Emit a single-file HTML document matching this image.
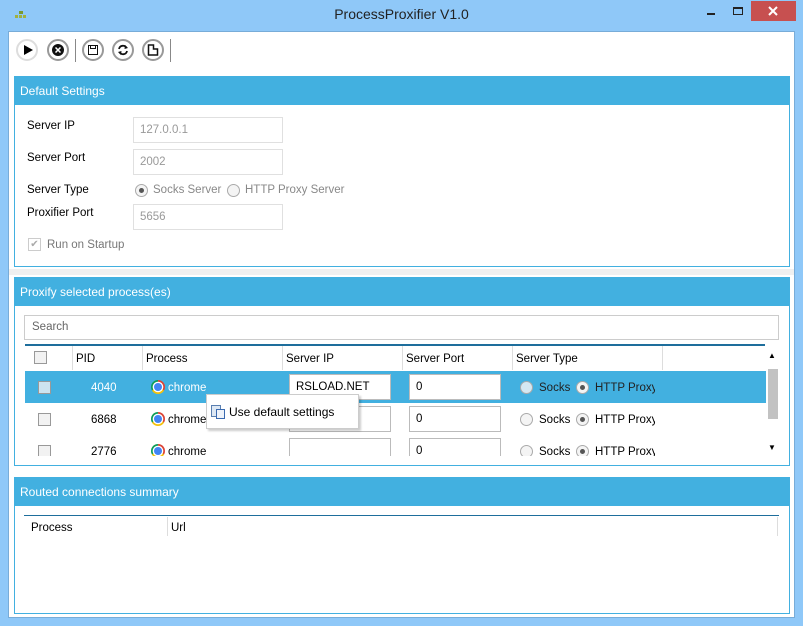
<!DOCTYPE html>
<html><head><meta charset="utf-8"><style>
*{box-sizing:border-box;margin:0;padding:0}
body{width:803px;height:626px;background:#8fc8f8;font-family:"Segoe UI","Liberation Sans",sans-serif;font-size:11.5px;line-height:16px;color:#000;position:relative;overflow:hidden}
.a{position:absolute;white-space:nowrap}
.client{left:8px;top:31px;width:787px;height:587px;background:#fff;border:1px solid #78acd8}
.hdr{background:#42b0e0;color:#fff;font-size:12px;padding-left:5px;line-height:28px}
.panel{border:1px solid #42b0e0;background:#fff}
.tb{width:22px;height:22px;border-radius:50%;border:2px solid #999;background:#fff}
.box{border:1px solid #e0e0e0;color:#999;padding-left:6px;line-height:24px;height:26px}
.rad{width:13px;height:13px;border-radius:50%;border:1px solid #aaa;background:#f4f4f4}
.rad.on::after{content:"";position:absolute;left:3px;top:3px;width:5px;height:5px;border-radius:50%;background:#555}
.chk{width:13px;height:13px;border:1px solid #999;background:#f2f2f2}
.chr{width:14px;height:14px;border-radius:50%;background:conic-gradient(#db4437 0 120deg,#f4c20d 120deg 240deg,#0f9d58 240deg 360deg)}
.chr::after{content:"";position:absolute;left:3px;top:3px;width:8px;height:8px;border-radius:50%;background:#4285f4;box-shadow:0 0 0 1.3px #fff}
.inp{background:#fff;border:1px solid #bbb;height:26px;line-height:24px;padding-left:6px}
</style></head><body>
<div class="a" style="left:15px;top:11px;width:12px;height:8px">
<div class="a" style="left:4px;top:0;width:4px;height:3px;background:#7a9a30"></div>
<div class="a" style="left:0;top:4px;width:3px;height:3px;background:#a0b040"></div>
<div class="a" style="left:4px;top:4px;width:3px;height:3px;background:#a0b040"></div>
<div class="a" style="left:8px;top:4px;width:3px;height:3px;background:#a0b040"></div></div>
<div class="a" style="left:0;width:803px;top:6px;text-align:center;font-size:14px;color:#222">ProcessProxifier V1.0</div>
<div class="a" style="left:707px;top:13px;width:8px;height:2px;background:#222"></div>
<div class="a" style="left:733px;top:7px;width:10px;height:8px;border:1px solid #222;border-top-width:2px"></div>
<div class="a" style="left:751px;top:1px;width:45px;height:20px;background:#c75050"></div>
<svg class="a" style="left:768px;top:6px" width="10" height="10"><path d="M1 1L9 9M9 1L1 9" stroke="#fff" stroke-width="2"/></svg>
<div class="a client"></div>
<div class="a tb" style="left:16px;top:39px;border-color:#ddd"></div>
<div class="a" style="left:24px;top:45px;width:0;height:0;border-left:9px solid #000;border-top:5px solid transparent;border-bottom:5px solid transparent"></div>
<div class="a tb" style="left:47px;top:39px"></div>
<div class="a" style="left:52px;top:44px;width:12px;height:12px;border-radius:50%;background:#111"></div>
<svg class="a" style="left:55px;top:47px" width="6" height="6"><path d="M0.5 0.5L5.5 5.5M5.5 0.5L0.5 5.5" stroke="#fff" stroke-width="1.5"/></svg>
<div class="a" style="left:75px;top:39px;width:1px;height:23px;background:#888"></div>
<div class="a tb" style="left:82px;top:39px"></div>
<div class="a" style="left:88px;top:45px;width:10px;height:10px;border:1.5px solid #111"></div>
<div class="a" style="left:90px;top:45px;width:6px;height:4px;border:1.5px solid #111;border-top:0"></div>
<div class="a tb" style="left:112px;top:39px"></div>
<svg class="a" style="left:117px;top:44px" width="12" height="12"><path d="M2 5A4 4 0 0 1 9.5 4M10 7A4 4 0 0 1 2.5 8" stroke="#111" stroke-width="1.8" fill="none"/><path d="M8 1L11 4L7.5 5Z M4 11L1 8L4.5 7Z" fill="#111"/></svg>
<div class="a tb" style="left:142px;top:39px"></div>
<svg class="a" style="left:147px;top:44px" width="12" height="12"><path d="M1.5 1V11H10.5V5H6.5V1Z" stroke="#111" stroke-width="1.5" fill="none"/></svg>
<div class="a" style="left:170px;top:39px;width:1px;height:23px;background:#888"></div>
<div class="a panel" style="left:14px;top:76px;width:776px;height:191px"><div class="hdr">Default Settings</div></div>
<div class="a" style="left:27px;top:118px">Server IP</div>
<div class="a box" style="left:133px;top:117px;width:150px">127.0.0.1</div>
<div class="a" style="left:27px;top:150px">Server Port</div>
<div class="a box" style="left:133px;top:149px;width:150px">2002</div>
<div class="a" style="left:27px;top:182px">Server Type</div>
<div class="a rad on" style="left:135px;top:184px"></div>
<div class="a" style="left:153px;top:182px;color:#888">Socks Server</div>
<div class="a rad" style="left:227px;top:184px"></div>
<div class="a" style="left:245px;top:182px;color:#888">HTTP Proxy Server</div>
<div class="a" style="left:27px;top:205px">Proxifier Port</div>
<div class="a box" style="left:133px;top:204px;width:150px">5656</div>
<div class="a chk" style="left:28px;top:238px;border-color:#ccc;background:#fff;color:#aaa;font-size:10px;line-height:11px;text-align:center">✔</div>
<div class="a" style="left:47px;top:237px;color:#777">Run on Startup</div>
<div class="a" style="left:9px;top:269px;width:785px;height:6px;background:#f0f0f0"></div>
<div class="a panel" style="left:14px;top:277px;width:776px;height:189px"><div class="hdr">Proxify selected process(es)</div></div>
<div class="a" style="left:24px;top:315px;width:755px;height:25px;border:1px solid #ccc;color:#666;padding-left:7px;line-height:22px">Search</div>
<div class="a" style="left:25px;top:344px;width:740px;height:2px;background:#1e6e9c"></div>
<div class="a chk" style="left:34px;top:351px"></div>
<div class="a" style="left:72px;top:346px;width:1px;height:24px;background:#ddd"></div>
<div class="a" style="left:142px;top:346px;width:1px;height:24px;background:#ddd"></div>
<div class="a" style="left:282px;top:346px;width:1px;height:24px;background:#ddd"></div>
<div class="a" style="left:402px;top:346px;width:1px;height:24px;background:#ddd"></div>
<div class="a" style="left:512px;top:346px;width:1px;height:24px;background:#ddd"></div>
<div class="a" style="left:662px;top:346px;width:1px;height:24px;background:#ddd"></div>
<div class="a" style="left:76px;top:351px">PID</div>
<div class="a" style="left:146px;top:351px">Process</div>
<div class="a" style="left:286px;top:351px">Server IP</div>
<div class="a" style="left:406px;top:351px">Server Port</div>
<div class="a" style="left:516px;top:351px">Server Type</div>
<div class="a" style="left:768px;top:348px;font-size:8px">▲</div>
<div class="a" style="left:768px;top:440px;font-size:8px">▼</div>
<div class="a" style="left:768px;top:369px;width:10px;height:50px;background:#c2c2c2"></div>
<div class="a" style="left:25px;top:371px;width:741px;height:85px;overflow:hidden">
 <div class="a" style="left:0;top:0;width:741px;height:32px;background:#42b0e0"></div>
 <div class="a chk" style="left:13px;top:10px;background:#cde4f0"></div>
 <div class="a chk" style="left:13px;top:42px"></div>
 <div class="a chk" style="left:13px;top:74px"></div>
 <div class="a" style="left:66px;top:9px;color:#fff">4040</div>
 <div class="a" style="left:66px;top:41px">6868</div>
 <div class="a" style="left:66px;top:73px">2776</div>
 <div class="a chr" style="left:126px;top:9px"></div><div class="a" style="left:143px;top:9px;color:#fff">chrome</div>
 <div class="a chr" style="left:126px;top:41px"></div><div class="a" style="left:143px;top:41px">chrome</div>
 <div class="a chr" style="left:126px;top:73px"></div><div class="a" style="left:143px;top:73px">chrome</div>
 <div class="a inp" style="left:264px;top:3px;width:102px">RSLOAD.NET</div>
 <div class="a inp" style="left:264px;top:35px;width:102px"></div>
 <div class="a inp" style="left:264px;top:67px;width:102px"></div>
 <div class="a inp" style="left:384px;top:3px;width:92px">0</div>
 <div class="a inp" style="left:384px;top:35px;width:92px">0</div>
 <div class="a inp" style="left:384px;top:67px;width:92px">0</div>
 <div class="a" style="left:490px;top:0;width:140px;height:85px;overflow:hidden">
 <div class="a rad" style="left:5px;top:10px;background:#d4e8f2"></div><div class="a" style="left:24px;top:9px;color:#222">Socks</div>
 <div class="a rad on" style="left:61px;top:10px"></div><div class="a" style="left:80px;top:9px;color:#222">HTTP Proxy</div>
 <div class="a rad" style="left:5px;top:42px"></div><div class="a" style="left:24px;top:41px">Socks</div>
 <div class="a rad on" style="left:61px;top:42px"></div><div class="a" style="left:80px;top:41px">HTTP Proxy</div>
 <div class="a rad" style="left:5px;top:74px"></div><div class="a" style="left:24px;top:73px">Socks</div>
 <div class="a rad on" style="left:61px;top:74px"></div><div class="a" style="left:80px;top:73px">HTTP Proxy</div>
 </div>
</div>
<div class="a" style="left:206px;top:394px;width:153px;height:35px;background:#fff;border:1px solid #ccc;box-shadow:2px 2px 2px rgba(0,0,0,.2)">
 <div class="a" style="left:4px;top:10px;width:10px;height:12px;background:#dde8f4;border:1px solid #5a7fb0"></div>
 <div class="a" style="left:9px;top:14px;width:9px;height:10px;background:#eef3fa;border:1px solid #3a6ab0"></div>
 <div class="a" style="left:22px;top:9px;font-size:12px">Use default settings</div>
</div>
<div class="a panel" style="left:14px;top:477px;width:776px;height:137px"><div class="hdr">Routed connections summary</div></div>
<div class="a" style="left:24px;top:515px;width:755px;height:1px;background:#1e6e9c"></div>
<div class="a" style="left:167px;top:517px;width:1px;height:19px;background:#ddd"></div>
<div class="a" style="left:777px;top:517px;width:1px;height:19px;background:#ddd"></div>
<div class="a" style="left:31px;top:520px">Process</div>
<div class="a" style="left:171px;top:520px">Url</div>
</body></html>
